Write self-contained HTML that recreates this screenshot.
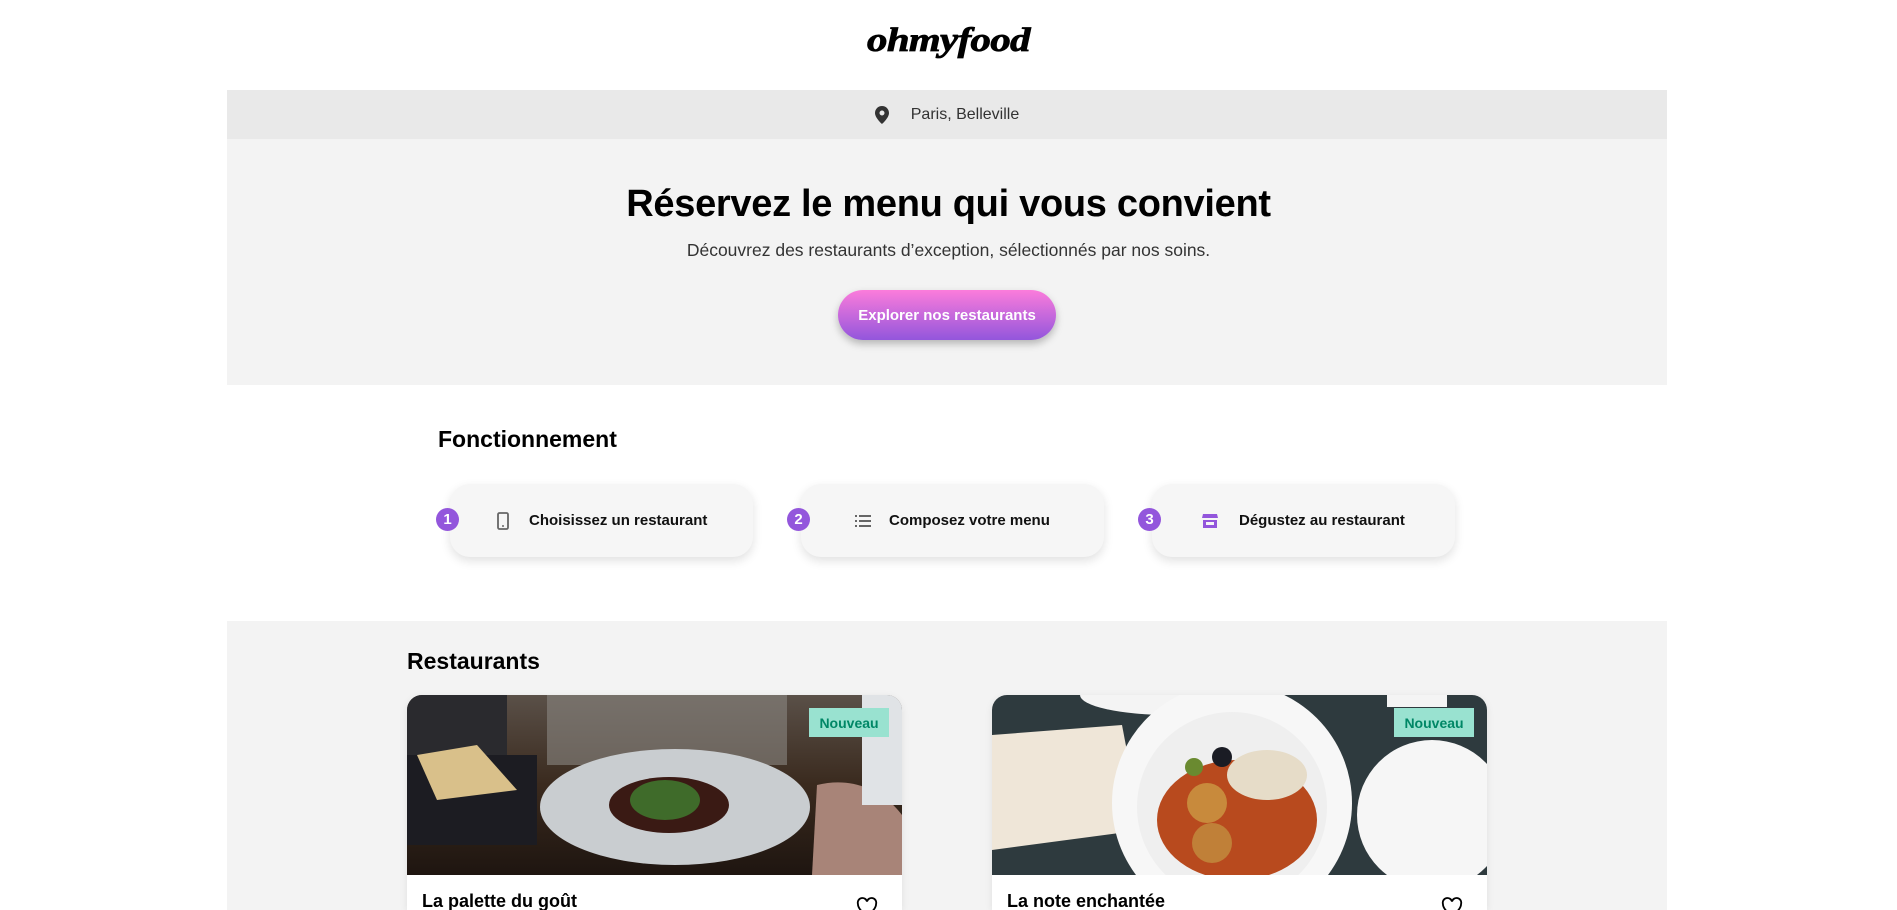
<!DOCTYPE html>
<html><head><meta charset="utf-8"><style>
*{margin:0;padding:0;box-sizing:border-box}
html,body{width:1897px;height:910px;overflow:hidden}
body{background:#fff;font-family:"Liberation Sans",Arial,sans-serif;position:relative;color:#000}
.abs{position:absolute}
.logo{left:0;width:1897px;top:22px;text-align:center;font-family:"Liberation Serif",serif;font-style:italic;font-weight:900;font-size:34px;letter-spacing:-0.5px;transform:scaleX(1.2);-webkit-text-stroke:0.8px #000}
.loc{left:227px;width:1440px;top:90px;height:49px;background:#e9e9e9;display:flex;align-items:center;justify-content:center;font-size:16px;color:#333}
.hero{left:227px;width:1440px;top:139px;height:246px;background:#f3f3f3}
.sub{left:0;width:1897px;top:240px;text-align:center;font-size:17.5px;color:#333}
.btn{left:838px;top:290px;width:218px;height:50px;border-radius:25px;background:linear-gradient(#fb7cdb,#9356dc);color:#fff;font-weight:bold;font-size:15px;display:flex;align-items:center;justify-content:center;box-shadow:0 4px 8px rgba(0,0,0,.25)}
.h2{font-size:23px;font-weight:bold}
.card{height:73px;width:303px;top:484px;background:#f6f6f6;border-radius:20px;box-shadow:0 4px 10px rgba(0,0,0,.12);display:flex;align-items:center;font-size:15px;font-weight:bold;color:#111}
.num{width:23px;height:23px;border-radius:50%;background:#9356dc;color:#fff;font-size:15px;font-weight:bold;display:flex;align-items:center;justify-content:center;top:508px}
.rest{left:227px;width:1440px;top:621px;height:289px;background:#f3f3f3}
.rc{top:695px;width:495px;height:215px;background:#fff;border-radius:15px 15px 0 0;overflow:hidden;box-shadow:0 2px 8px rgba(0,0,0,.08)}
.rc svg{display:block}
.badge{top:13px;right:13px;width:80px;height:29px;background:#99e2d0;color:#008766;font-weight:bold;font-size:14px;display:flex;align-items:center;justify-content:center}
.rt{left:15px;top:196px;font-size:18px;font-weight:bold}
</style></head><body>
<div class="abs logo">ohmyfood</div>
<div class="abs loc"><svg width="14" height="18" viewBox="0 0 14 18" style="margin-right:22px"><path d="M7 0C3.1 0 0 3.1 0 7c0 5 7 11 7 11s7-6 7-11c0-3.9-3.1-7-7-7zm0 9.5A2.5 2.5 0 1 1 7 4.5a2.5 2.5 0 0 1 0 5z" fill="#333"/></svg>Paris, Belleville</div>
<div class="abs hero"></div>
<div class="abs" style="left:0;width:1897px;top:183px;text-align:center;font-size:38px;font-weight:bold;letter-spacing:-0.3px">Réservez le menu qui vous convient</div>
<div class="abs sub">Découvrez des restaurants d’exception, sélectionnés par nos soins.</div>
<div class="abs btn">Explorer nos restaurants</div>
<div class="abs h2" style="left:438px;top:426px">Fonctionnement</div>

<div class="abs card" style="left:450px"><svg width="12" height="18" viewBox="0 0 12 18" style="margin-left:47px;margin-right:20px"><rect x="1" y="1" width="10" height="16" rx="1.5" fill="none" stroke="#666" stroke-width="1.8"/><circle cx="6" cy="14" r="1" fill="#666"/></svg>Choisissez un restaurant</div>
<div class="abs card" style="left:801px"><svg width="16" height="14" viewBox="0 0 16 14" style="margin-left:54px;margin-right:18px"><g fill="#666"><rect x="0" y="1" width="2" height="2"/><rect x="0" y="6" width="2" height="2"/><rect x="0" y="11" width="2" height="2"/><rect x="4" y="1" width="12" height="2"/><rect x="4" y="6" width="12" height="2"/><rect x="4" y="11" width="12" height="2"/></g></svg>Composez votre menu</div>
<div class="abs card" style="left:1152px"><svg width="16" height="16" viewBox="0 0 16 16" style="margin-left:50px;margin-right:21px"><path d="M1 1h14l1 4H0z" fill="#9356dc"/><rect x="1" y="7" width="14" height="8" fill="#9356dc"/><rect x="4" y="9" width="8" height="3" fill="#f6f6f6"/></svg>Dégustez au restaurant</div>
<div class="abs num" style="left:436px">1</div>
<div class="abs num" style="left:787px">2</div>
<div class="abs num" style="left:1138px">3</div>

<div class="abs rest"></div>
<div class="abs h2" style="left:407px;top:648px">Restaurants</div>

<div class="abs rc" style="left:407px">
<svg width="495" height="180" viewBox="0 0 495 180">
<defs><linearGradient id="g1" x1="0" y1="0" x2="0" y2="1"><stop offset="0" stop-color="#5a5048"/><stop offset=".5" stop-color="#3a2a1e"/><stop offset="1" stop-color="#1e1510"/></linearGradient></defs>
<rect width="495" height="180" fill="url(#g1)"/>
<rect x="140" y="0" width="240" height="70" fill="#8a8782" opacity=".6"/>
<rect x="0" y="0" width="100" height="60" fill="#2a2a2e"/>
<ellipse cx="268" cy="112" rx="135" ry="58" fill="#c9cdd0"/>
<ellipse cx="262" cy="110" rx="60" ry="28" fill="#3a1a14"/>
<ellipse cx="258" cy="105" rx="35" ry="20" fill="#3f6b2a"/>
<rect x="0" y="60" width="130" height="90" fill="#1c1c22"/>
<path d="M10 60l60-10 40 45-80 10z" fill="#d9c08a"/>
<path d="M410 90c40-10 70 10 85 30v60h-90z" fill="#a88478"/>
<rect x="455" y="0" width="40" height="110" fill="#e0e3e6"/>
</svg>
<div class="abs badge">Nouveau</div>
<div class="abs rt">La palette du goût</div>
<svg class="abs" style="left:449px;top:202px" width="22" height="20" viewBox="0 0 24 22"><path d="M12 21S2 14 2 7.5A5 5 0 0 1 12 5a5 5 0 0 1 10 2.5C22 14 12 21 12 21z" fill="none" stroke="#000" stroke-width="2"/></svg>
</div>

<div class="abs rc" style="left:992px">
<svg width="495" height="180" viewBox="0 0 495 180">
<rect width="495" height="180" fill="#2e3a3e"/>
<path d="M0 40l130-10 20 105-150 20z" fill="#efe6d8"/>
<ellipse cx="178" cy="0" rx="90" ry="20" fill="#f4f4f4"/>
<circle cx="240" cy="108" r="120" fill="#f7f7f7"/>
<circle cx="240" cy="112" r="95" fill="#efefef"/>
<ellipse cx="245" cy="125" rx="80" ry="60" fill="#b84a1e"/>
<circle cx="215" cy="108" r="20" fill="#c88a3c"/>
<circle cx="220" cy="148" r="20" fill="#c08038"/>
<ellipse cx="275" cy="80" rx="40" ry="25" fill="#e6dcc8"/>
<circle cx="202" cy="72" r="9" fill="#6a8a30"/>
<circle cx="230" cy="62" r="10" fill="#1a1c24"/>
<circle cx="440" cy="120" r="75" fill="#f6f6f6"/>
<rect x="395" y="0" width="60" height="12" fill="#f4f4f4"/>
</svg>
<div class="abs badge">Nouveau</div>
<div class="abs rt">La note enchantée</div>
<svg class="abs" style="left:449px;top:202px" width="22" height="20" viewBox="0 0 24 22"><path d="M12 21S2 14 2 7.5A5 5 0 0 1 12 5a5 5 0 0 1 10 2.5C22 14 12 21 12 21z" fill="none" stroke="#000" stroke-width="2"/></svg>
</div>
</body></html>
